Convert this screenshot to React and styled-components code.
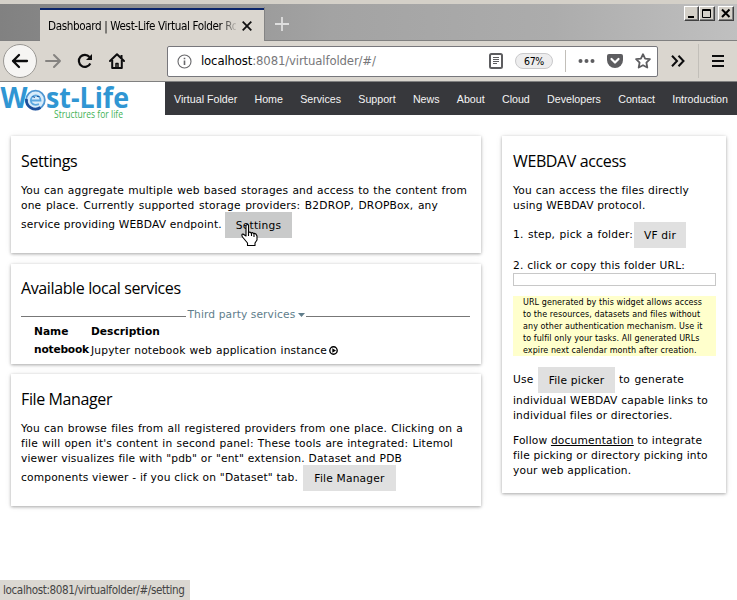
import React from "react";
import styled, { createGlobalStyle } from "styled-components";

const Global = createGlobalStyle`
  * { box-sizing: border-box; }
  body { margin: 0; background: #fff; overflow: hidden; }
`;

const Window = styled.div`
  position: relative;
  width: 737px;
  height: 600px;
  display: flex;
  flex-direction: column;
  font-family: "DejaVu Sans", Verdana, sans-serif;
  font-size: 10.67px;
  color: #000;
  overflow: hidden;
`;
const TitleBar = styled.div`
  height: 41px;
  flex: none;
  display: flex;
  padding-left: 40px;
  border-top: 4px solid #d4d0c8;
  box-shadow: inset 0 -1px #808080;
  background: linear-gradient(90deg, #818181, #a3a3a3 45%, #acacac 75%, #c0c0c0);
  background-clip: padding-box;
`;
const Tab = styled.div`
  width: 224px;
  height: 33px;
  margin-top: 4px;
  padding: 0 12px 0 8px;
  display: flex;
  align-items: center;
  justify-content: space-between;
  background: #dad6cf;
  border-top: 2px solid #0a246a;
`;
const TabTitle = styled.div`
  width: 188px;
  overflow: hidden;
  white-space: nowrap;
  font: 11.6px/20px "DejaVu Sans Condensed", Tahoma, sans-serif;
  letter-spacing: -0.37px;
  mask-image: linear-gradient(90deg, #000 172px, transparent 190px);
`;
const NewTab = styled.div`
  width: 35px;
  display: flex;
  align-items: center;
  justify-content: center;
  margin-top: 3px;
  border-left: 1px solid #848484;
`;
const WindowButtons = styled.div`
  display: flex;
  margin: 2px 3px 0 auto;
`;
const WinButton = styled.div`
  width: ${(p) => p.$w || 15}px;
  height: 15px;
  margin-left: ${(p) => p.$gap || 0}px;
  background: #d4d0c8;
  border: 1px solid;
  border-color: #fff #404040 #404040 #fff;
  box-shadow: inset -1px -1px #808080;
  svg { display: block; }
`;
const Toolbar = styled.div`
  height: 41px;
  flex: none;
  display: flex;
  align-items: center;
  background: #dad6cf;
  border-bottom: 1px solid #808080;
`;
const BackButton = styled.div`
  width: 34px;
  height: 34px;
  margin-left: 3px;
  border: 1px solid #9a9894;
  border-radius: 50%;
  background: #f6f5f3;
  display: flex;
  align-items: center;
  justify-content: center;
`;
const ToolIcon = styled.div`
  width: 32px;
  display: flex;
  justify-content: center;
`;
const OverflowButton = styled.div`
  width: 40px;
  display: flex;
  justify-content: center;
`;
const MenuButton = styled.div`
  display: flex;
  margin-left: 13px;
`;
const UrlBar = styled.div`
  width: 491px;
  height: 31px;
  margin-left: 34px;
  padding: 0 6px 0 9px;
  display: flex;
  align-items: center;
  background: #fff;
  border: 1px solid #77777c;
  border-radius: 2px;
`;
const Url = styled.div`
  flex: 1;
  margin-left: 9px;
  white-space: nowrap;
  font: 13px/20px "DejaVu Sans Condensed", Tahoma, sans-serif;
  letter-spacing: -0.14px;
  color: #77777a;
  b { font-weight: 400; color: #000; }
`;
const Zoom = styled.div`
  width: 38px;
  height: 16px;
  margin: 0 12px 0 12px;
  border: 1px solid #c9c9cb;
  border-radius: 8px;
  background: #ededee;
  text-align: center;
  font: 10.5px/14px "DejaVu Sans Condensed", Tahoma, sans-serif;
  letter-spacing: -0.3px;
`;
const Divider = styled.div`
  width: 1px;
  height: ${(p) => p.$h}px;
  background: #c2bfb9;
`;
const UrlIcons = styled.div`
  display: flex;
  align-items: center;
  gap: 12px;
  margin-left: 12px;
`;
const Header = styled.div`
  display: flex;
  height: 40px;
  flex: none;
`;
const Logo = styled.svg`
  width: 165px;
  height: 40px;
  flex: none;
`;
const Nav = styled.nav`
  flex: 1;
  height: 33px;
  display: flex;
  align-items: center;
  justify-content: space-between;
  padding: 0 9px;
  background: #37383c;
  color: #f4f4f4;
  font: 10.67px/16px "Liberation Sans", Arial, sans-serif;
  white-space: nowrap;
`;
const Columns = styled.main`
  display: flex;
  align-items: flex-start;
  gap: 21px;
  padding: 14px 11px 0;
`;
const LeftColumn = styled.div`
  width: 470px;
  display: flex;
  flex-direction: column;
  gap: 10px;
`;
const Card = styled.section`
  width: ${(p) => p.$w || 470}px;
  height: ${(p) => p.$h}px;
  margin-bottom: ${(p) => p.$mb || 0}px;
  padding: ${(p) => p.$pt || 14}px ${(p) => p.$pr || 11}px 0 ${(p) => p.$pl || 10}px;
  background: #fff;
  box-shadow: 0 1px 3px rgba(0, 0, 0, 0.32), 0 0 8px rgba(0, 0, 0, 0.06);
`;
const Title = styled.h2`
  margin: 0 0 11px;
  font: 400 16px/22px "Open Sans", "Segoe UI", sans-serif;
  letter-spacing: -0.38px;
  white-space: nowrap;
`;
const Line = styled.div`
  width: ${(p) => p.$w}px;
  height: ${(p) => p.$h || 15}px;
  line-height: 15px;
  white-space: nowrap;
  text-align-last: justify;
  letter-spacing: 0.16px;
`;
const Row = styled.div`
  display: flex;
  height: 26px;
  line-height: 24px;
  margin-top: ${(p) => p.$mt || 0}px;
`;
const RowText = styled(Line)`
  height: 24px;
  line-height: 25px;
  margin-right: ${(p) => p.$gap || 0}px;
`;
const Button = styled.span`
  width: ${(p) => p.$w}px;
  height: 26px;
  margin-right: ${(p) => p.$gap || 0}px;
  line-height: 27px;
  text-align: center;
  white-space: nowrap;
  letter-spacing: 0.2px;
  background: ${(p) => (p.$hover ? "#c9caca" : "#e0e0e0")};
`;
const Legend = styled.div`
  display: flex;
  align-items: center;
  height: 15px;
  margin-top: -3px;
  color: #607d8b;
  white-space: nowrap;
  letter-spacing: 0.1px;
  &::before, &::after { content: ""; flex: 1; height: 1px; margin-top: 4px; background: #777; }
  span { margin: 0 2px; width: 108px; }
  svg { margin-right: 1px; }
`;
const Services = styled.div`
  display: grid;
  grid-template-columns: 57px 1fr;
  grid-auto-rows: 18px;
  margin: 1px 0 0 13px;
  line-height: 18px;
  white-space: nowrap;
`;
const Strong = styled.b`
  letter-spacing: ${(p) => p.$ls || 0}px;
`;
const ServiceDesc = styled.div`
  display: flex;
  align-items: center;
  gap: 2px;
`;
const UrlField = styled.div`
  width: 203px;
  height: 13px;
  border: 1px solid #c8c8c8;
`;
const Notice = styled.div`
  width: 203px;
  height: 60px;
  margin: 10px 0 11px;
  padding: 1px 10px;
  background: #ffffcc;
  font-size: 8px;
`;
const NoticeLine = styled(Line)`
  height: 12px;
  line-height: 12px;
  letter-spacing: 0.08px;
`;
const Gap = styled.div`
  height: ${(p) => p.$h}px;
`;
const Status = styled.div`
  position: absolute;
  left: 0;
  bottom: 0;
  width: 190px;
  height: 20px;
  padding-left: 3px;
  background: #dbd8d2;
  color: #444;
  font: 11.6px/21px "DejaVu Sans Condensed", Tahoma, sans-serif;
  letter-spacing: -0.38px;
  white-space: nowrap;
`;
const Cursor = styled.svg`
  position: absolute;
  left: 241px;
  top: 224px;
`;

const NAV = ["Virtual Folder", "Home", "Services", "Support", "News", "About", "Cloud", "Developers", "Contact", "Introduction"];
const NOTICE = [
  [178, "URL generated by this widget allows access"],
  [176, "to the resources, datasets and files without"],
  [178, "any other authentication mechanism. Use it"],
  [176, "to fulfil only your tasks. All generated URLs"],
  [172, "expire next calendar month after creation."],
];

const Arrow = ({ color, flip }) => (
  <svg width="18" height="16" viewBox="0 0 18 16" fill="none" stroke={color} strokeWidth="2" strokeLinecap="round" strokeLinejoin="round">
    {flip ? <path d="M2 8H16M10 2l6 6-6 6" /> : <path d="M16 8H2M8 2L2 8l6 6" strokeWidth="2.3" />}
  </svg>
);

export default function App() {
  return (
    <Window>
      <Global />
      <TitleBar>
        <Tab>
          <TabTitle>Dashboard | West-Life Virtual Folder Ro</TabTitle>
          <svg width="10" height="10" viewBox="0 0 10 10" stroke="#111" strokeWidth="1.8"><path d="M.7.7l8.6 8.6M9.3.7L.7 9.3" /></svg>
        </Tab>
        <NewTab>
          <svg width="14" height="14" viewBox="0 0 14 14" stroke="#dedede" strokeWidth="1.8"><path d="M7 0v14M0 7h14" /></svg>
        </NewTab>
        <WindowButtons>
          <WinButton><svg width="13" height="13"><path d="M3 10h6" stroke="#000" strokeWidth="2" /></svg></WinButton>
          <WinButton $w={16}><svg width="13" height="13" fill="none" stroke="#000"><path d="M2.5 2.5h8v8h-8zM2 3.5h9" /></svg></WinButton>
          <WinButton $w={16} $gap={3}><svg width="13" height="13" stroke="#000" strokeWidth="2"><path d="M3 2.5l7.5 7.5M10.5 2.5L3 10" /></svg></WinButton>
        </WindowButtons>
      </TitleBar>
      <Toolbar>
        <BackButton><Arrow color="#0c0c0d" /></BackButton>
        <ToolIcon><Arrow color="#858380" flip /></ToolIcon>
        <ToolIcon>
          <svg width="16" height="16" viewBox="0 0 16 16" fill="none" stroke="#0c0c0d" strokeWidth="2.2">
            <path d="M12.5 4A6 6 0 1 0 13.3 10.5" /><path d="M15 1v6H9z" fill="#0c0c0d" stroke="none" />
          </svg>
        </ToolIcon>
        <ToolIcon>
          <svg width="16" height="16" viewBox="0 0 16 16" fill="none" stroke="#0c0c0d" strokeWidth="2" strokeLinejoin="round">
            <path d="M1 8L8 1.2 15 8" strokeLinecap="round" /><path d="M3.2 7v8h9.6V7" /><path d="M7 15v-4.5h2V15" strokeWidth="1.5" /><path d="M12.5 2v3" />
          </svg>
        </ToolIcon>
        <UrlBar>
          <svg width="15" height="15" viewBox="0 0 15 15" fill="none" stroke="#68686b"><circle cx="7.5" cy="7.5" r="6.5" strokeWidth="1.1" /><path d="M7.5 6.5V11M7.5 3.7v1.6" strokeWidth="1.6" /></svg>
          <Url><b>localhost</b>:8081/virtualfolder/#/</Url>
          <svg width="14" height="16" viewBox="0 0 14 16" fill="none" stroke="#5d5d60"><rect x="1" y="1" width="12" height="14" rx="1.5" strokeWidth="2" /><path d="M4 4.5h6M4 6.5h6M4 8.5h6M4 10.5h4" /></svg>
          <Zoom>67%</Zoom>
          <Divider $h={22} />
          <UrlIcons>
            <svg width="17" height="16" fill="#5d5d60"><circle cx="2.5" cy="8" r="2" /><circle cx="8.5" cy="8" r="2" /><circle cx="14.5" cy="8" r="2" /></svg>
            <svg width="16" height="16" viewBox="0 0 16 16"><path d="M2 1h12a2 2 0 0 1 2 2v4a8 8 0 0 1-16 0V3a2 2 0 0 1 2-2z" fill="#5d5d60" /><path d="M4.5 6L8 9.5 11.5 6" fill="none" stroke="#fff" strokeWidth="2.2" strokeLinecap="round" strokeLinejoin="round" /></svg>
            <svg width="16" height="16" viewBox="0 0 16 16"><path d="M8 1.2l2.1 4.4 4.8.6-3.5 3.4.9 4.9L8 12.2l-4.3 2.3.9-4.9L1.1 6.2l4.8-.6z" fill="none" stroke="#5d5d60" strokeWidth="1.8" strokeLinejoin="round" /></svg>
          </UrlIcons>
        </UrlBar>
        <OverflowButton>
          <svg width="14" height="12" viewBox="0 0 14 12" fill="none" stroke="#0c0c0d" strokeWidth="2"><path d="M1 .8L6 6l-5 5.2M7.5.8L12.5 6l-5 5.2" /></svg>
        </OverflowButton>
        <Divider $h={34} />
        <MenuButton>
          <svg width="12" height="12" stroke="#0c0c0d" strokeWidth="2"><path d="M0 1h12M0 6h12M0 11h12" /></svg>
        </MenuButton>
      </Toolbar>
      <Header>
        <Logo viewBox="0 0 165 40">
          <g fill="#3096d3" fontFamily="Open Sans, sans-serif" fontWeight="700" fontSize="29">
            <text x="0.5" y="25.5" textLength="27" lengthAdjust="spacingAndGlyphs">W</text>
            <text x="46" y="25.5" textLength="83" lengthAdjust="spacingAndGlyphs">st-Life</text>
          </g>
          <circle cx="35.5" cy="18" r="9.3" fill="#d9ecfa" stroke="#4f96d2" strokeWidth="1.8" />
          <path d="M26.5 17a9 9 0 0 0 14 8.5" fill="none" stroke="#1d4f9c" strokeWidth="2.8" />
          <path d="M31 18.5h9.5c0-3-2-5-4.7-5s-5 2-5 5 3 5.500 8.200 3.700" fill="none" stroke="#5ba6df" strokeWidth="1.8" />
          <path d="M32.5 14.5l2.5 1M37 14.500h2.500" stroke="#235a9e" />
          <text x="54" y="36" textLength="69" lengthAdjust="spacingAndGlyphs" fill="#3fb257" fontFamily="Open Sans, sans-serif" fontSize="11.5">Structures for life</text>
        </Logo>
        <Nav>{NAV.map((n) => <span key={n}>{n}</span>)}</Nav>
      </Header>
      <Columns>
        <LeftColumn>
          <Card $h={117} $mb={1}>
            <Title>Settings</Title>
            <Line $w={446}>You can aggregate multiple web based storages and access to the content from</Line>
            <Line $w={417} $h={14}>one place. Currently supported storage providers: B2DROP, DROPBox, any</Line>
            <Row>
              <RowText $w={200} $gap={4}>service providing WEBDAV endpoint.</RowText>
              <Button $w={67} $hover>Settings</Button>
            </Row>
          </Card>
          <Card $h={100} $pt={13}>
            <Title>Available local services</Title>
            <Legend>
              <span>Third party services</span>
              <svg width="7" height="4"><path d="M0 0h7L3.5 4z" fill="#607d8b" /></svg>
            </Legend>
            <Services>
              <Strong>Name</Strong><Strong>Description</Strong>
              <Strong $ls={-0.2}>notebook</Strong>
              <ServiceDesc>
                <Line $w={236}>Jupyter notebook web application instance</Line>
                <svg width="9" height="9" viewBox="0 0 9 9"><circle cx="4.5" cy="4.5" r="3.7" fill="none" stroke="#000" strokeWidth="1.4" /><path d="M3.3 2.2L7 4.5 3.3 6.8z" /></svg>
              </ServiceDesc>
            </Services>
          </Card>
          <Card $h={132}>
            <Title>File Manager</Title>
            <Line $w={442}>You can browse files from all registered providers from one place. Clicking on a</Line>
            <Line $w={432}>file will open it's content in second panel: These tools are integrated: Litemol</Line>
            <Line $w={381} $h={14}>viewer visualizes file with "pdb" or "ent" extension. Dataset and PDB</Line>
            <Row>
              <RowText $w={277} $gap={5}>components viewer - if you click on "Dataset" tab.</RowText>
              <Button $w={93}>File Manager</Button>
            </Row>
          </Card>
        </LeftColumn>
        <Card $w={224} $h={357} $pl={11} $pr={10}>
          <Title>WEBDAV access</Title>
          <Line $w={176}>You can access the files directly</Line>
          <Line $w={131}>using WEBDAV protocol.</Line>
          <Row $mt={9}>
            <RowText $w={120} $gap={1}>1. step, pick a folder:</RowText>
            <Button $w={52}>VF dir</Button>
          </Row>
          <Gap $h={10} />
          <Line $w={172}>2. click or copy this folder URL:</Line>
          <UrlField />
          <Notice>{NOTICE.map(([w, t]) => <NoticeLine key={t} $w={w}>{t}</NoticeLine>)}</Notice>
          <Row>
            <RowText $w={20} $gap={5}>Use</RowText>
            <Button $w={77} $gap={4}>File picker</Button>
            <RowText $w={65}>to generate</RowText>
          </Row>
          <Line $w={195}>individual WEBDAV capable links to</Line>
          <Line $w={159}>individual files or directories.</Line>
          <Gap $h={10} />
          <Line $w={189}>Follow <u>documentation</u> to integrate</Line>
          <Line $w={194}>file picking or directory picking into</Line>
          <Line $w={116}>your web application.</Line>
        </Card>
      </Columns>
      <Status>localhost:8081/virtualfolder/#/setting</Status>
      <Cursor width="18" height="23" viewBox="0 0 18 23" fill="#fff" stroke="#000" strokeWidth="1.1" strokeLinejoin="round">
        <path d="M5 1.5q1.5-2 2.5 0v7q1.5-1 2.5.5 1.5-1 2.5.5 2.5-.7 3.5 2.5v4l-2 3v2.5H6.5V19L1.5 13q-1.5-3 .5-3L5 12z" />
        <path d="M7.5 8v4M10.5 9v3M13 10v3" />
      </Cursor>
    </Window>
  );
}
